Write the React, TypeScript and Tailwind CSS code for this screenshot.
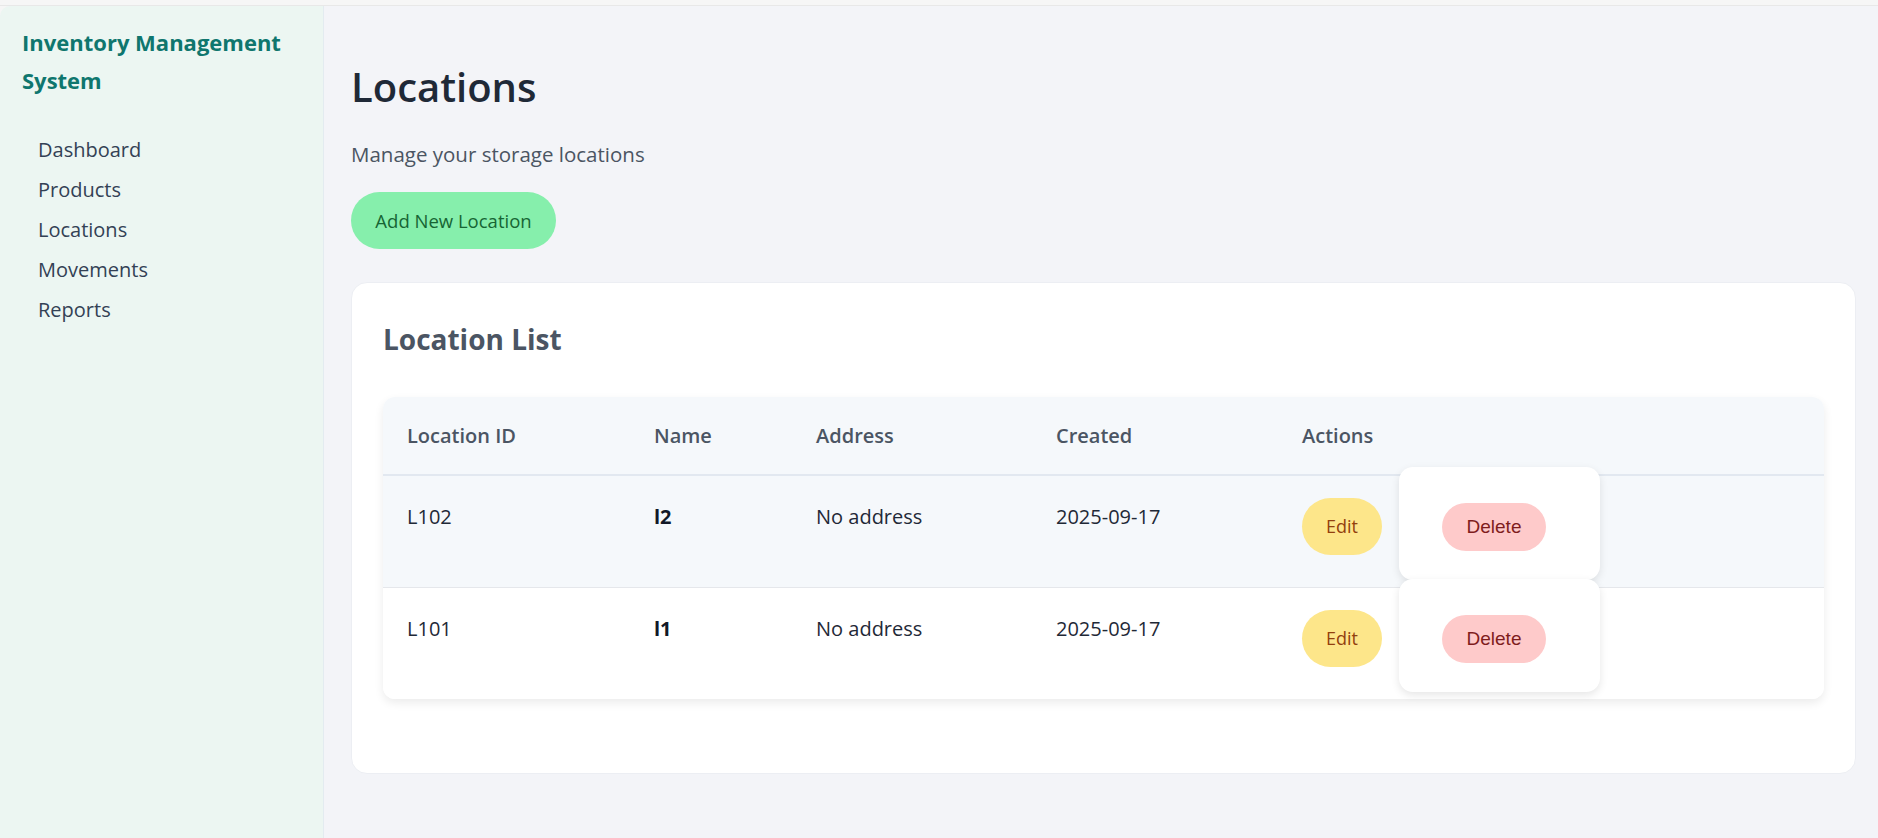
import React from "react";

const navItems = ["Dashboard", "Products", "Locations", "Movements", "Reports"];

const locations = [
  { id: "L102", name: "l2", address: "No address", created: "2025-09-17", shaded: true },
  { id: "L101", name: "l1", address: "No address", created: "2025-09-17", shaded: false },
];

const font = "font-['Segoe_UI','Open_Sans',sans-serif]";

const App = () => {
  return (
    <div className={`h-screen flex flex-col bg-[#f6f6f6] ${font}`}>
      <div className="h-[6px] shrink-0 border-b border-[#e8e8e8]" />
      <div className="flex flex-1 rounded-tl-[10px] overflow-hidden bg-[#f3f4f8]">
        {/* sidebar */}
        <aside className="w-[324px] shrink-0 bg-[#ecf6f2] border-r border-[#e3ebf0] pl-[22px] pt-[17px]">
          <h1 className="text-[22px] leading-[38px] font-bold text-[#0f766e] w-[280px]">
            Inventory Management System
          </h1>
          <nav className="mt-[31px] pl-[16px] flex flex-col">
            {navItems.map((item) => (
              <a key={item} className="text-[20px] leading-[40px] text-[#334155]">
                {item}
              </a>
            ))}
          </nav>
        </aside>

        {/* main */}
        <main className="flex-1 pl-[27px] pr-[22px] pt-[57px]">
          <h2 className="text-[40px] leading-[48px] font-semibold text-[#1f2937]">Locations</h2>
          <p className="mt-[31px] text-[20.5px] leading-[24px] text-[#4b5563]">
            Manage your storage locations
          </p>
          <button className="mt-[26px] h-[57px] w-[205px] rounded-full bg-[#86efac] text-[18.5px] text-[#166534]">
            Add New Location
          </button>

          <section className="mt-[33px] bg-white rounded-[16px] border border-[#eceef3] px-[31px] pt-[38px] pb-[74px]">
            <h3 className="text-[28px] leading-[36px] font-bold text-[#4b5563]">Location List</h3>
            <div className="mt-[40px] rounded-[12px] shadow-[0_4px_10px_rgba(0,0,0,0.08)] bg-white">
              <table className="w-full table-fixed border-collapse text-left">
                <colgroup>
                  <col className="w-[247px]" />
                  <col className="w-[162px]" />
                  <col className="w-[240px]" />
                  <col className="w-[246px]" />
                  <col />
                </colgroup>
                <thead>
                  <tr className="bg-[#f5f8fb] border-b-2 border-[#e2e8f0] h-[78px]">
                    {["Location ID", "Name", "Address", "Created", "Actions"].map((h, i) => (
                      <th
                        key={h}
                        className={`px-[24px] text-[20px] font-semibold text-[#4b5563] ${i === 0 ? "rounded-tl-[12px]" : ""} ${i === 4 ? "rounded-tr-[12px]" : ""}`}
                      >
                        {h}
                      </th>
                    ))}
                  </tr>
                </thead>
                <tbody>
                  {locations.map((loc, idx) => (
                    <tr
                      key={loc.id}
                      className={`${loc.shaded ? "bg-[#f5f8fb]" : "bg-white"} ${idx === 0 ? "border-b border-[#e5e7eb]" : ""}`}
                    >
                      <td className={`align-top px-[24px] pt-[23px] text-[20px] leading-[36px] text-[#1f2937] ${idx === 1 ? "rounded-bl-[12px]" : ""}`}>
                        {loc.id}
                      </td>
                      <td className="align-top px-[24px] pt-[23px] text-[20px] leading-[36px] font-bold text-[#111827]">
                        {loc.name}
                      </td>
                      <td className="align-top px-[24px] pt-[23px] text-[20px] leading-[36px] text-[#1f2937]">
                        {loc.address}
                      </td>
                      <td className="align-top px-[24px] pt-[23px] text-[20px] leading-[36px] text-[#1f2937]">
                        {loc.created}
                      </td>
                      <td className={`align-top px-[24px] ${idx === 1 ? "rounded-br-[12px]" : ""}`}>
                        <div className="flex items-start gap-[17px]">
                          <button className="mt-[22px] h-[57px] w-[80px] rounded-full bg-[#fde68a] text-[18px] text-[#92400e]">
                            Edit
                          </button>
                          <form className="-mt-[9px] mb-[7px] w-[201px] h-[113px] bg-white rounded-[14px] shadow-[0_3px_8px_rgba(0,0,0,0.1)] pl-[43px] pt-[36px]">
                            <button
                              type="button"
                              className="h-[48px] w-[104px] rounded-full bg-[#fecaca] text-[19px] text-[#7f1d1d] font-['Liberation_Sans',Arial,sans-serif]"
                            >
                              Delete
                            </button>
                          </form>
                        </div>
                      </td>
                    </tr>
                  ))}
                </tbody>
              </table>
            </div>
          </section>
        </main>
      </div>
    </div>
  );
};

export default App;
